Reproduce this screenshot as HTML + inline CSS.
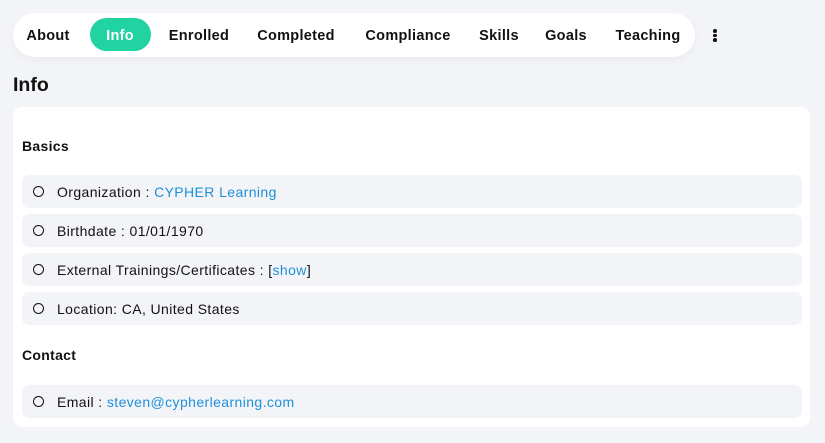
<!DOCTYPE html>
<html><head><style>
body{margin:0;width:825px;height:443px;background:#f3f4f8;font-family:"Liberation Sans",sans-serif;color:#111;position:relative;overflow:hidden}
.bar{position:absolute;left:13px;top:13px;width:682px;height:44px;background:#fff;border-radius:22px;box-shadow:0 3px 8px rgba(0,0,0,0.04)}
.tab{position:absolute;top:36px;transform:translate(-50%,-50%);font-weight:bold;font-size:14.5px;white-space:nowrap;letter-spacing:0.3px}
.pill{position:absolute;left:90px;top:18px;width:61px;height:33px;border-radius:17px;background:#22d3a2}
h1{position:absolute;left:13px;top:74px;margin:0;font-size:19.5px;font-weight:bold}
.card{position:absolute;left:13px;top:107px;width:797px;height:320px;background:#fff;border-radius:9px}
.h{position:absolute;left:22px;font-weight:bold;font-size:14px;letter-spacing:0.3px}
.row{position:absolute;left:22px;width:780px;height:33px;background:#f3f4f8;border-radius:7px;font-size:14px;line-height:34px;letter-spacing:0.4px}
.row span.c{position:absolute;left:11px;top:11px;width:9px;height:9px;border:1.6px solid #111;border-radius:50%}
.row .t{position:absolute;left:35px}
a{color:#1e90d8;text-decoration:none}
.dots{position:absolute;left:713px;top:29px;width:4px}
.dots i{display:block;width:3.5px;height:3.5px;background:#111;border-radius:50%;margin-bottom:1px}
</style></head><body>
<div class="bar"></div>
<div class="pill"></div>
<div class="tab" style="left:48px">About</div>
<div class="tab" style="left:120px;color:#fff">Info</div>
<div class="tab" style="left:199px">Enrolled</div>
<div class="tab" style="left:296px">Completed</div>
<div class="tab" style="left:408px">Compliance</div>
<div class="tab" style="left:499px">Skills</div>
<div class="tab" style="left:566px">Goals</div>
<div class="tab" style="left:648px">Teaching</div>
<div class="dots"><i></i><i></i><i></i></div>
<h1>Info</h1>
<div class="card"></div>
<div class="h" style="top:138px">Basics</div>
<div class="row" style="top:175px"><span class="c"></span><span class="t">Organization : <a>CYPHER Learning</a></span></div>
<div class="row" style="top:214px"><span class="c"></span><span class="t">Birthdate : 01/01/1970</span></div>
<div class="row" style="top:253px"><span class="c"></span><span class="t">External Trainings/Certificates : [<a>show</a>]</span></div>
<div class="row" style="top:292px"><span class="c"></span><span class="t">Location: CA, United States</span></div>
<div class="h" style="top:347px">Contact</div>
<div class="row" style="top:385px"><span class="c"></span><span class="t">Email : <a>steven@cypherlearning.com</a></span></div>
</body></html>
